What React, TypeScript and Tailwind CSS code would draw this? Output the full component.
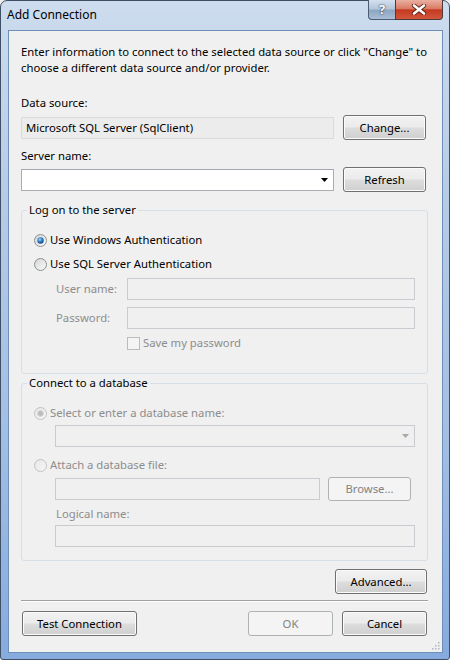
import type { ReactNode } from 'react';

function Btn({ className = '', disabled = false, children }: { className?: string; disabled?: boolean; children: ReactNode }) {
  const look = disabled
    ? 'border-[#adb2b5] bg-[#f4f4f4] text-[#838383]'
    : 'border-[#707070] bg-[linear-gradient(180deg,#f2f2f2_0%,#ebebeb_48%,#dddddd_52%,#cfcfcf_100%)] shadow-[inset_0_0_0_1px_#fbfbfb] text-black';
  return (
    <button className={`flex items-center justify-center rounded-[3px] border leading-none ${look} ${className}`}>
      {children}
    </button>
  );
}

function Radio({ kind }: { kind: 'on' | 'off' | 'dimOn' | 'dimOff' }) {
  const dim = kind === 'dimOn' || kind === 'dimOff';
  return (
    <svg width="13" height="13" viewBox="0 0 13 13" className="shrink-0">
      <defs>
        <linearGradient id={`rf-${kind}`} x1="0" y1="0" x2="1" y2="1">
          <stop offset="0" stopColor={dim ? '#e6e6e6' : '#d2d4d6'} />
          <stop offset="1" stopColor={dim ? '#f7f7f7' : '#fbfbfb'} />
        </linearGradient>
        <radialGradient id="rdot" cx="0.4" cy="0.35" r="0.7">
          <stop offset="0" stopColor="#a6d7f6" />
          <stop offset="0.5" stopColor="#2a7ec4" />
          <stop offset="1" stopColor="#143f71" />
        </radialGradient>
      </defs>
      <circle cx="6.5" cy="6.5" r="6" fill={`url(#rf-${kind})`} stroke={dim ? '#c2c2c2' : '#8e8f8f'} />
      {kind === 'on' && <circle cx="6.5" cy="6.5" r="3.2" fill="url(#rdot)" />}
      {kind === 'dimOn' && <circle cx="6.5" cy="6.5" r="3" fill="#bdbdbd" stroke="#d8d8d8" strokeWidth="0.8" />}
    </svg>
  );
}

function Arrow({ dim = false }: { dim?: boolean }) {
  return (
    <svg width="7" height="4" viewBox="0 0 7 4" className="shrink-0">
      <path d="M0 0h7L3.5 4z" fill={dim ? '#a8a8a8' : '#000'} />
    </svg>
  );
}

export default function App() {
  return (
    <div className="w-[450px] h-[660px] overflow-hidden bg-[#f0f0f0] font-['Noto_Sans',sans-serif] text-[11.3px] text-black">
      <div className="h-full flex flex-col rounded-t-[7px] rounded-b-[3px] border border-[#3f4f66] bg-[linear-gradient(180deg,#cddcee_0%,#b6cbe6_30%,#a3bfe3_65%,#86abde_100%)]">
        {/* title bar */}
        <div className="h-[29px] flex items-start justify-between">
          <div className="pl-[6px] pt-[6px] leading-[16px] text-[12px] text-black">Add Connection</div>
          <div className="-mt-px mr-[6px] flex">
            <div className="w-[27px] h-[20px] flex items-center justify-center rounded-bl-[4px] border border-t-0 border-r-0 border-[#4b5b70] bg-[linear-gradient(180deg,#d4e0ee_0%,#b4c6dc_45%,#8ea6c2_55%,#a9bdd6_100%)] text-white font-bold text-[13px] [text-shadow:0_0_2px_#2b3a50,0_0_1px_#2b3a50]">
              ?
            </div>
            <div className="w-[48px] h-[20px] flex items-center justify-center rounded-br-[4px] border border-t-0 border-[#4b3a3a] bg-[linear-gradient(180deg,#eab0a2_0%,#d97b64_45%,#c43a22_52%,#d2563d_100%)]">
              <svg width="16" height="11" viewBox="0 0 16 11">
                <path d="M3 1.5l10 8M13 1.5l-10 8" stroke="#5a1a10" strokeWidth="4.2" strokeLinecap="round" />
                <path d="M3 1.5l10 8M13 1.5l-10 8" stroke="#fff" strokeWidth="2.6" strokeLinecap="round" />
              </svg>
            </div>
          </div>
        </div>

        {/* client area */}
        <div className="relative flex-1 ml-[7px] mr-[6px] mb-[6px] bg-[#f0f0f0] border border-[#6f8fbb] pl-[12px] pr-[14px] pt-[13px]">
          <p className="leading-[16px] whitespace-nowrap">
            Enter information to connect to the selected data source or click "Change" to
            <br />
            choose a different data source and/or provider.
          </p>

          <div className="mt-[19px] leading-[16px]">Data source:</div>
          <div className="mt-[4px] h-[25px] flex items-center gap-[9px]">
            <div className="w-[313px] h-[22px] flex items-center px-[4px] border border-[#d9dadc] bg-[#ececec] leading-none">
              Microsoft SQL Server (SqlClient)
            </div>
            <Btn className="w-[83px] h-[25px]">Change...</Btn>
          </div>

          <div className="mt-[8px] leading-[16px]">Server name:</div>
          <div className="mt-[3px] h-[25px] flex items-center gap-[9px]">
            <div className="w-[313px] h-[22px] flex items-center justify-end pr-[5px] border border-[#abadb3] border-t-[#a3a7b0] bg-white">
              <Arrow />
            </div>
            <Btn className="w-[83px] h-[25px]">Refresh</Btn>
          </div>

          {/* log on group */}
          <fieldset className="mt-[10px] rounded-[3px] border border-[#d5dfe5]">
            <legend className="ml-[5px] px-[2px] leading-[16px]">Log on to the server</legend>
            <div className="px-[12px] pt-[14px] pb-[22px]">
              <div className="h-[16px] flex items-center gap-[3px]">
                <Radio kind="on" />
                <span>Use Windows Authentication</span>
              </div>
              <div className="mt-[8px] h-[16px] flex items-center gap-[3px]">
                <Radio kind="off" />
                <span>Use SQL Server Authentication</span>
              </div>
              <div className="mt-[6px] flex items-center">
                <span className="w-[93px] pl-[22px] text-[#8d8d8d]">User name:</span>
                <div className="flex-1 h-[22px] border border-[#c9cbd0] bg-[#f0f0f0]" />
              </div>
              <div className="mt-[7px] flex items-center">
                <span className="w-[93px] pl-[22px] text-[#8d8d8d]">Password:</span>
                <div className="flex-1 h-[22px] border border-[#c9cbd0] bg-[#f0f0f0]" />
              </div>
              <div className="mt-[6px] h-[16px] pl-[93px] flex items-center gap-[3px]">
                <div className="w-[13px] h-[13px] border border-[#bcbcbc] bg-[#f4f4f4]" />
                <span className="text-[#8d8d8d]">Save my password</span>
              </div>
            </div>
          </fieldset>

          {/* database group */}
          <fieldset className="mt-[1px] rounded-[3px] border border-[#d5dfe5]">
            <legend className="ml-[5px] px-[2px] leading-[16px]">Connect to a database</legend>
            <div className="px-[12px] pt-[14px] pb-[13px]">
              <div className="h-[16px] flex items-center gap-[3px]">
                <Radio kind="dimOn" />
                <span className="text-[#8d8d8d]">Select or enter a database name:</span>
              </div>
              <div className="mt-[4px] ml-[21px] h-[22px] flex items-center justify-end pr-[5px] border border-[#c9cbd0] bg-[#f0f0f0]">
                <Arrow dim />
              </div>
              <div className="mt-[10px] h-[16px] flex items-center gap-[3px]">
                <Radio kind="dimOff" />
                <span className="text-[#8d8d8d]">Attach a database file:</span>
              </div>
              <div className="mt-[4px] ml-[21px] h-[24px] flex items-center gap-[8px]">
                <div className="w-[265px] h-[22px] border border-[#c9cbd0] bg-[#f0f0f0]" />
                <Btn disabled className="w-[83px] h-[24px]">Browse...</Btn>
              </div>
              <div className="mt-[5px] ml-[22px] leading-[16px] text-[#8d8d8d]">Logical name:</div>
              <div className="mt-[3px] ml-[21px] h-[22px] border border-[#c9cbd0] bg-[#f0f0f0]" />
            </div>
          </fieldset>

          <div className="mt-[8px] flex justify-end pr-px">
            <Btn className="w-[92px] h-[25px]">Advanced...</Btn>
          </div>

          <div className="mt-[6px] h-px bg-[#a0a0a0] shadow-[0_1px_0_#ffffff]" />

          <div className="mt-[10px] flex items-center px-px">
            <Btn className="w-[115px] h-[25px]">Test Connection</Btn>
            <Btn disabled className="ml-auto w-[85px] h-[25px]">OK</Btn>
            <Btn className="ml-[9px] w-[85px] h-[25px]">Cancel</Btn>
          </div>

          {/* size grip */}
          <svg width="10" height="10" viewBox="0 0 10 10" className="absolute right-[2px] bottom-[2px]">
            {[[8, 2], [8, 5], [5, 5], [8, 8], [5, 8], [2, 8]].map(([x, y]) => (
              <rect key={`${x}-${y}`} x={x} y={y} width="1.5" height="1.5" fill="#b0b8c4" />
            ))}
          </svg>
        </div>
      </div>
    </div>
  );
}
